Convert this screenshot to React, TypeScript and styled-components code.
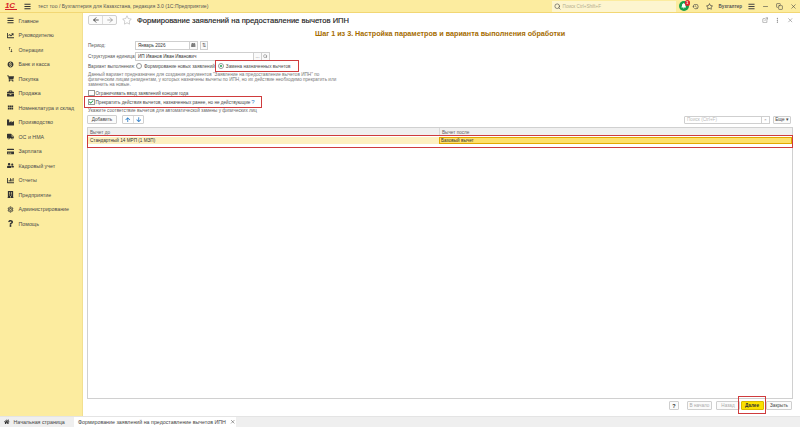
import styled, { createGlobalStyle } from 'styled-components'
import {
  FaBars, FaChartLine, FaShoppingCart, FaBriefcase, FaIndustry,
  FaTruck, FaCreditCard, FaUserFriends, FaChartBar, FaBuilding, FaQuestion, FaHome,
  FaArrowUp, FaArrowDown, FaCalendarAlt, FaBell, FaRegStar, FaCheck,
} from 'react-icons/fa'
import { MdMonetizationOn, MdSwapVert, MdViewModule, MdOutlineSettings, MdHistory } from 'react-icons/md'
import { FiSearch, FiExternalLink, FiX, FiMoreVertical, FiMinus, FiCopy, FiArrowLeft, FiArrowRight } from 'react-icons/fi'

const Global = createGlobalStyle`
  html, body { margin: 0; padding: 0; height: 427px; overflow: hidden; background: #fff; }
  * { box-sizing: border-box; }
  body { font-family: "Liberation Sans", Arial, sans-serif; font-size: 4.65px; color: #4a4a4a; white-space: nowrap; }
`

const Page = styled.div`
  width: 800px;
  height: 427px;
  display: flex;
  flex-direction: column;
`

const TopBar = styled.header`
  height: 13px;
  flex: none;
  display: flex;
  align-items: center;
  background: #fcec9f;
  border-bottom: 1px solid #f2d774;
`

const Logo = styled.span`
  flex: none;
  width: 12px;
  margin-left: 5px;
  color: #d8232a;
  font-weight: 700;
  font-style: italic;
  font-size: 8px;
  letter-spacing: -0.3px;
  border-bottom: 1px solid #d8232a;
  line-height: 7px;
`

const AppTitle = styled.span`
  margin-left: 7px;
  flex: 1;
  font-size: 5.15px;
  color: #555;
`

const Burger = styled.span`
  margin-left: 7px;
  display: flex;
  font-size: 7px;
  color: #333;
`

const SearchBox = styled.div`
  width: 124px;
  height: 11px;
  background: #fdf5cf;
  display: flex;
  align-items: center;
  gap: 2px;
  padding-left: 2px;
  color: #b5ae8e;
  font-size: 4.6px;
  svg { font-size: 7px; color: #444; }
`

const Notify = styled.span`
  position: relative;
  width: 10px;
  height: 10px;
  border-radius: 50%;
  background: #18a04c;
  margin-left: 3px;
  display: flex;
  align-items: center;
  justify-content: center;
  color: #fff;
  font-size: 5.5px;
`

const Badge = styled.span`
  position: absolute;
  top: -1px;
  right: -1.5px;
  width: 5.5px;
  height: 5.5px;
  border-radius: 50%;
  background: #e0242b;
  color: #fff;
  font-size: 4px;
  font-weight: 700;
  line-height: 5.5px;
  text-align: center;
`

const TopIcon = styled.span`
  display: flex;
  justify-content: center;
  width: 14px;
  font-size: 7px;
  color: #444;
`

const UserName = styled.span`
  font-size: 4.6px;
  font-weight: 700;
  color: #555;
  margin: 0 2px;
`

const Middle = styled.div`
  flex: 1;
  display: flex;
  min-height: 0;
`

const Sidebar = styled.nav`
  width: 83px;
  flex: none;
  background: #fcec9f;
  border-right: 1px solid #f2e090;
  padding-top: 0.5px;
`

const NavItem = styled.div`
  height: 14.5px;
  display: flex;
  align-items: center;
  color: #4a4a4a;
  font-size: 5.3px;
  svg { width: 7px; height: 7px; margin: 0 5px 0 6.5px; color: #333; flex: none; }
`

const Main = styled.main`
  flex: 1;
  display: flex;
  flex-direction: column;
  padding: 0 7px 0 4px;
  min-width: 0;
`

const Header = styled.div`
  height: 14px;
  padding-left: 1px;
  display: flex;
  align-items: center;
`

const NavButtons = styled.div`
  width: 29px;
  height: 10px;
  display: flex;
  border: 1px solid #cfcfcf;
  border-radius: 2px;
  background: #fbfbfb;
`

const NavArrow = styled.span<{ $dim?: boolean }>`
  flex: 1;
  display: flex;
  align-items: center;
  justify-content: center;
  font-size: 8px;
  color: ${p => (p.$dim ? '#888' : '#111')};
  & + & { border-left: 1px solid #dcdcdc; }
`

const StarWrap = styled.span`
  margin: 0 5px;
  display: flex;
  font-size: 10px;
  color: #ccc;
`

const Title = styled.h1`
  flex: 1;
  margin: 0;
  font-size: 7.6px;
  font-weight: 400;
  color: #222;
  -webkit-text-stroke: 0.15px #222;
`

const HeadTools = styled.div`
  display: flex;
  gap: 6px;
  color: #777;
  font-size: 6.5px;
  svg { display: block; }
`

const StepTitle = styled.h2`
  margin: 0;
  height: 13px;
  line-height: 13px;
  text-align: center;
  font-size: 7.2px;
  font-weight: 700;
  color: #a56c00;
`

const Row = styled.div<{ $h?: number; $mt?: number }>`
  display: flex;
  align-items: center;
  height: ${p => p.$h ?? 10}px;
  margin-top: ${p => p.$mt ?? 0}px;
  padding-left: 1px;
`

const Label = styled.span`
  width: 47px;
  flex: none;
  color: #555;
`

const Field = styled.div<{ $w: number }>`
  width: ${p => p.$w}px;
  height: 9px;
  display: flex;
  align-items: center;
  border: 1px solid #cfcfcf;
  background: #fff;
  color: #333;
  padding-left: 2px;
  flex: none;
`

const FieldButton = styled.span<{ $w?: number; $gap?: number }>`
  width: ${p => p.$w ?? 9}px;
  height: 9px;
  flex: none;
  margin-left: ${p => p.$gap ?? -1}px;
  display: flex;
  align-items: center;
  justify-content: center;
  border: 1px solid #cfcfcf;
  background: #fafafa;
  color: #555;
  font-size: 4.6px;
`

const Radio = styled.span<{ $on?: boolean }>`
  width: 6px;
  height: 6px;
  border-radius: 50%;
  border: 1px solid #999;
  background: #fff;
  flex: none;
  margin-right: 2px;
  position: relative;
  &::after {
    content: '';
    display: ${p => (p.$on ? 'block' : 'none')};
    position: absolute;
    inset: 1px;
    border-radius: 50%;
    background: #1a9b4b;
  }
`

const Marked = styled.div`
  outline: 1.5px solid #cf3b3d;
  display: flex;
  align-items: center;
`

const VariantMark = styled(Marked)`
  margin-left: 1px;
  padding: 2px 7px 2px 2px;
`

const EndMark = styled(Marked)`
  margin-left: -3px;
  padding: 1.5px 6px 1.5px 3px;
`

const RowMark = styled(Marked)`
  display: block;
  padding: 1px 0 2.5px;
`

const FirstRadio = styled(Radio)`
  margin-left: 1px;
`

const Description = styled.p`
  margin: 0;
  padding-left: 1px;
  height: 17px;
  padding-top: 0.5px;
  line-height: 5.4px;
  font-size: 4.65px;
  color: #777;
`

const Check = styled.span`
  width: 6.5px;
  height: 6.5px;
  flex: none;
  border: 1px solid #999;
  background: #fff;
  margin-right: 1px;
  color: #1a9b4b;
  display: flex;
  align-items: center;
  justify-content: center;
  font-size: 6px;
`

const HelpMark = styled.span`
  color: #2f7fc9;
  margin-left: 1px;
  font-size: 6px;
`

const Hint = styled.div`
  color: #666;
  height: 7px;
  line-height: 7px;
  padding-left: 1px;
  margin-top: 1px;
`

const Toolbar = styled.div`
  height: 9px;
  margin-top: 1px;
  display: flex;
  align-items: center;
`

const Button = styled.span<{ $w: number; $disabled?: boolean }>`
  width: ${p => p.$w}px;
  height: 9px;
  display: flex;
  align-items: center;
  justify-content: center;
  border: 1px solid #cfcfcf;
  border-radius: 1px;
  background: #fbfbfb;
  color: ${p => (p.$disabled ? '#aaa' : '#444')};
  flex: none;
`

const ArrowGroup = styled.div`
  margin-left: 5px;
  display: flex;
  width: 22px;
  height: 9px;
  border: 1px solid #cfcfcf;
  border-radius: 1px;
`

const ArrowBtn = styled.span`
  flex: 1;
  display: flex;
  align-items: center;
  justify-content: center;
  font-size: 5.5px;
  color: #2f7fc9;
  & + & { border-left: 1px solid #ddd; }
`

const TableSearch = styled.div`
  margin-left: auto;
  width: 78px;
  height: 8px;
  border: 1px solid #cfcfcf;
  border-radius: 1px;
  color: #bbb;
  padding-left: 2px;
  line-height: 6px;
`

const SearchClear = styled.span`
  width: 9px;
  height: 8px;
  margin-left: -1px;
  border: 1px solid #cfcfcf;
  color: #888;
  font-size: 4px;
  line-height: 6px;
  text-align: center;
`

const MoreBtn = styled(Button)`
  margin: 0 2px 0 3px;
  height: 8px;
`

const Table = styled.div`
  flex: 1;
  margin-top: 3px;
  border: 1px solid #d0d0d0;
  min-height: 0;
`

const TableRow = styled.div<{ $head?: boolean }>`
  display: grid;
  grid-template-columns: 351px 1fr;
  height: ${p => (p.$head ? 8 : 7)}px;
  background: ${p => (p.$head ? '#f0f0f0' : '#fdf0c0')};
  color: ${p => (p.$head ? '#666' : '#333')};
  align-items: stretch;
`

const Cell = styled.div<{ $head?: boolean; $active?: boolean }>`
  display: flex;
  align-items: center;
  padding-left: 2px;
  border-left: ${p => (p.$head ? '1px solid #d8d8d8' : 'none')};
  ${p => p.$active && 'background: #fddf6a; border: 1px solid #e2a800; padding-left: 1px;'}
  &:first-child { border-left: none; }
`

const Footer = styled.div`
  height: 17px;
  flex: none;
  padding: 0 1px 4px 0;
  display: flex;
  align-items: center;
  justify-content: flex-end;
`

const Help = styled(Button)`
  font-weight: 700;
  font-size: 5.5px;
  color: #333;
  margin-right: 8px;
`

const BackButton = styled(Button)`
  margin: 0 -2px 0 4px;
`

const NextButton = styled(Button)`
  background: #fbe100;
  border-color: #d9b900;
  font-weight: 700;
  color: #333;
`

const NextMark = styled.div`
  border: 1.5px solid #cf3b3d;
  padding: 4.5px 1.5px 2.5px;
  margin-bottom: 2px;
  display: flex;
`

const Tabs = styled.div`
  height: 11px;
  flex: none;
  display: flex;
  background: #efefef;
  font-size: 5.3px;
  color: #444;
  border-top: 1px solid #e4e4e4;
`

const Tab = styled.div<{ $active?: boolean }>`
  display: flex;
  align-items: center;
  gap: 4px;
  background: ${p => (p.$active ? '#fff' : 'transparent')};
  padding: 0 2px 0 4px;
  width: ${p => (p.$active ? 162 : 74)}px;
  svg { font-size: 5.5px; color: #333; flex: none; }
`

const nav = [
  [FaBars, 'Главное'],
  [FaChartLine, 'Руководителю'],
  [MdSwapVert, 'Операции'],
  [MdMonetizationOn, 'Банк и касса'],
  [FaShoppingCart, 'Покупка'],
  [FaBriefcase, 'Продажа'],
  [MdViewModule, 'Номенклатура и склад'],
  [FaIndustry, 'Производство'],
  [FaTruck, 'ОС и НМА'],
  [FaCreditCard, 'Зарплата'],
  [FaUserFriends, 'Кадровый учет'],
  [FaChartBar, 'Отчеты'],
  [FaBuilding, 'Предприятие'],
  [MdOutlineSettings, 'Администрирование'],
  [FaQuestion, 'Помощь'],
] as const

export default function App() {
  return (
    <Page>
      <Global />
      <TopBar>
        <Logo>1С</Logo>
        <Burger><FaBars /></Burger>
        <AppTitle>тест тоо / Бухгалтерия для Казахстана, редакция 3.0 (1С:Предприятие)</AppTitle>
        <SearchBox><FiSearch />Поиск Ctrl+Shift+F</SearchBox>
        <Notify><FaBell /><Badge>1</Badge></Notify>
        <TopIcon><MdHistory /></TopIcon>
        <TopIcon><FaRegStar /></TopIcon>
        <UserName>Бухгалтер</UserName>
        <TopIcon><FaBars /></TopIcon>
        <TopIcon><FiMinus /></TopIcon>
        <TopIcon><FiCopy /></TopIcon>
        <TopIcon><FiX /></TopIcon>
      </TopBar>
      <Middle>
        <Sidebar>
          {nav.map(([Icon, label]) => (
            <NavItem key={label}><Icon />{label}</NavItem>
          ))}
        </Sidebar>
        <Main>
          <Header>
            <NavButtons>
              <NavArrow><FiArrowLeft /></NavArrow>
              <NavArrow $dim><FiArrowRight /></NavArrow>
            </NavButtons>
            <StarWrap><FaRegStar /></StarWrap>
            <Title>Формирование заявлений на предоставление вычетов ИПН</Title>
            <HeadTools><FiExternalLink /><FiMoreVertical /><FiX /></HeadTools>
          </Header>
          <StepTitle>Шаг 1 из 3. Настройка параметров и варианта выполнения обработки</StepTitle>
          <Row>
            <Label>Период:</Label>
            <Field $w={55}>Январь 2026</Field>
            <FieldButton><FaCalendarAlt /></FieldButton>
            <FieldButton $gap={2} $w={8}>⇅</FieldButton>
          </Row>
          <Row $mt={1}>
            <Label>Структурная единица:</Label>
            <Field $w={119}>ИП Иванов Иван Иванович</Field>
            <FieldButton>...</FieldButton>
            <FieldButton><FiSearch /></FieldButton>
          </Row>
          <Row>
            <Label>Вариант выполнения:</Label>
            <FirstRadio />
            <span>Формирование новых заявлений</span>
            <VariantMark>
              <Radio $on />
              <span>Замена назначенных вычетов</span>
            </VariantMark>
          </Row>
          <Description>
            Данный вариант предназначен для создания документов "Заявление на предоставление вычетов ИПН" по
            <br />
            физическим лицам резидентам, у которых назначены вычеты по ИПН, но их действие необходимо прекратить или
            <br />
            заменить на новые.
          </Description>
          <Row>
            <Check />
            <span>Ограничивать ввод заявлений концом года</span>
          </Row>
          <Row $h={8}>
            <EndMark>
              <Check><FaCheck /></Check>
              <span>Прекратить действия вычетов, назначенных ранее, но не действующие</span>
              <HelpMark>?</HelpMark>
            </EndMark>
          </Row>
          <Hint>Укажите соответствие вычетов для автоматической замены у физических лиц</Hint>
          <Toolbar>
            <Button $w={30}>Добавить</Button>
            <ArrowGroup>
              <ArrowBtn><FaArrowUp /></ArrowBtn>
              <ArrowBtn><FaArrowDown /></ArrowBtn>
            </ArrowGroup>
            <TableSearch>Поиск (Ctrl+F)</TableSearch>
            <SearchClear>×</SearchClear>
            <MoreBtn $w={18}>Еще ▾</MoreBtn>
          </Toolbar>
          <Table>
            <TableRow $head>
              <Cell $head>Вычет до</Cell>
              <Cell $head>Вычет после</Cell>
            </TableRow>
            <RowMark>
              <TableRow>
                <Cell>Стандартный 14 МРП (1 МЗП)</Cell>
                <Cell $active>Базовый вычет</Cell>
              </TableRow>
            </RowMark>
          </Table>
          <Footer>
            <Help $w={10}>?</Help>
            <Button $w={25} $disabled>В начало</Button>
            <BackButton $w={24} $disabled>Назад</BackButton>
            <NextMark><NextButton $w={23}>Далее</NextButton></NextMark>
            <Button $w={26}>Закрыть</Button>
          </Footer>
        </Main>
      </Middle>
      <Tabs>
        <Tab><FaHome />Начальная страница</Tab>
        <Tab $active>Формирование заявлений на предоставление вычетов ИПН<FiX /></Tab>
      </Tabs>
    </Page>
  )
}
